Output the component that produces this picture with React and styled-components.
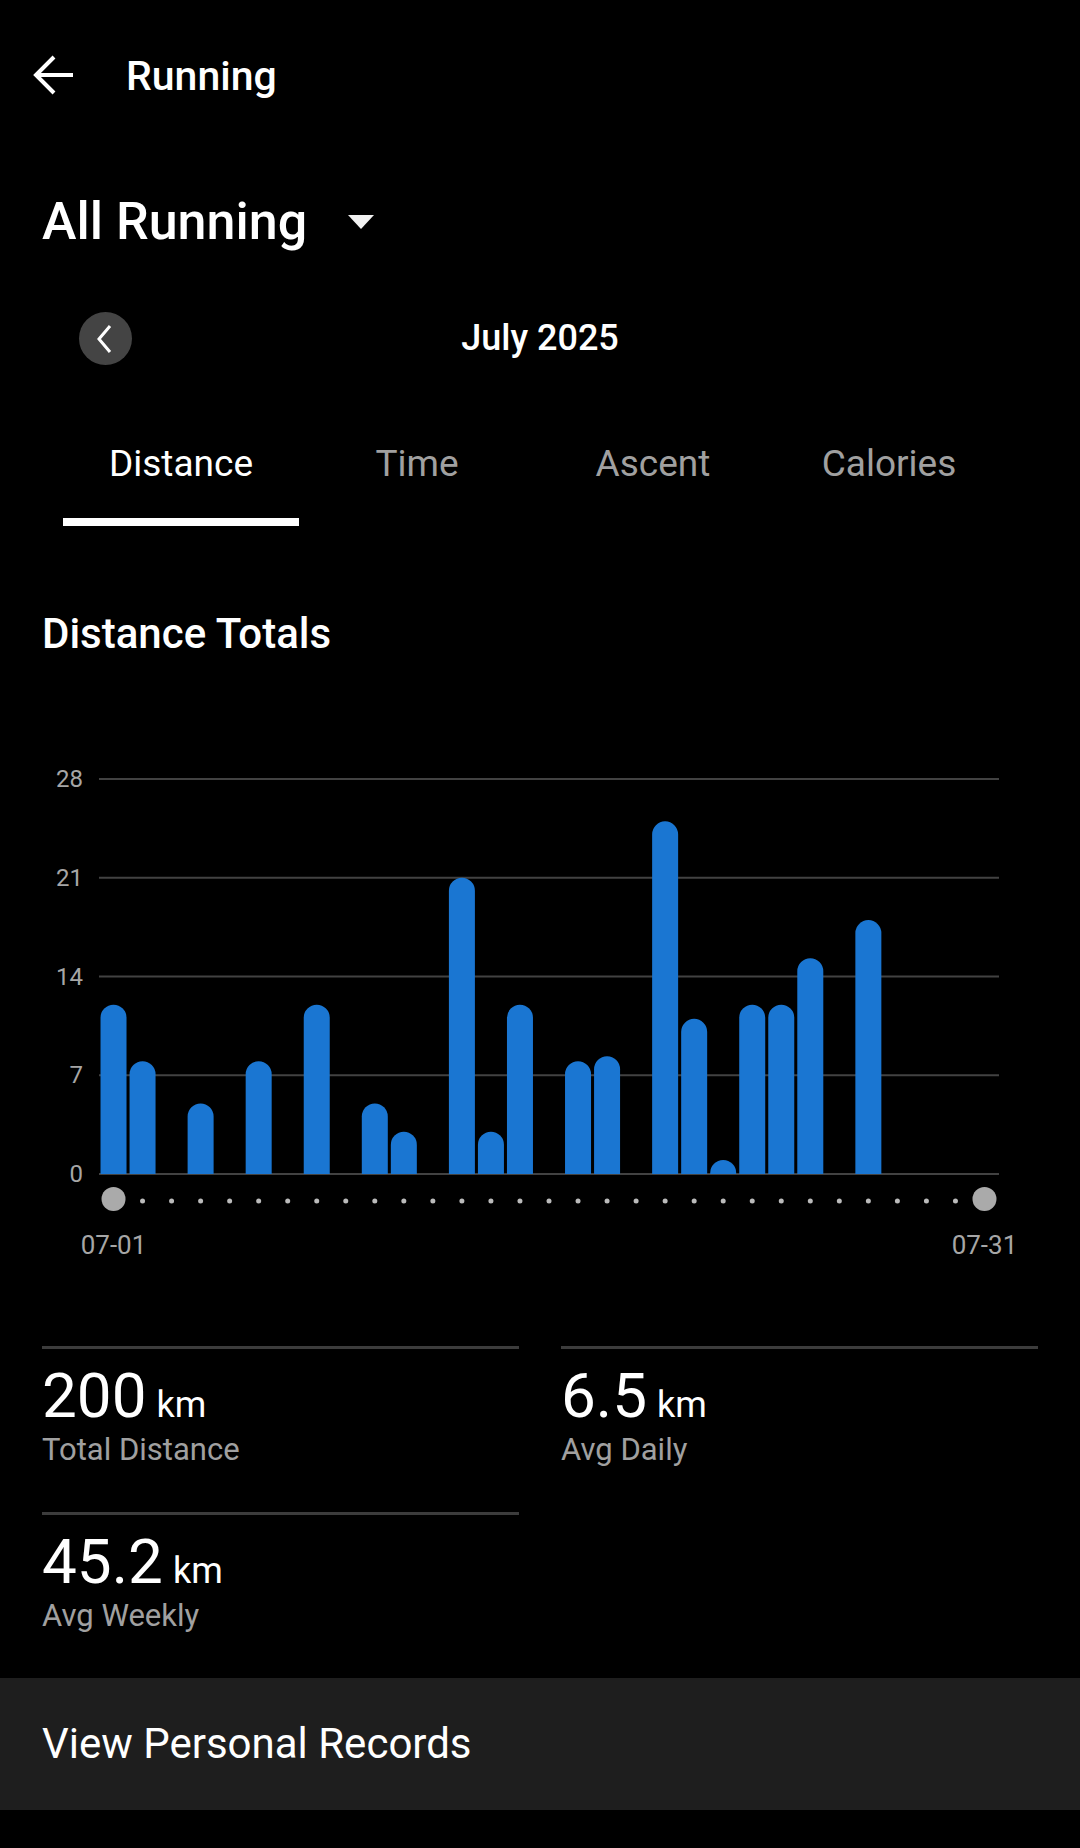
import styled, { createGlobalStyle } from 'styled-components';

const GlobalStyle = createGlobalStyle`
  html, body {
    margin: 0;
    padding: 0;
    background: #000;
  }
  body {
    font-family: Roboto, 'Liberation Sans', Arial, sans-serif;
    color: #fff;
  }
`;

// km per day for July
const days = [
  12, 8, 0, 5, 0, 8, 0, 12, 0, 5, 3, 0, 21, 3, 12, 0, 8, 8.35, 0, 25, 11, 1,
  12, 12, 15.3, 0, 18, 0, 0, 0, 0,
];

const tabs = ['Distance', 'Time', 'Ascent', 'Calories'];
const ticks = [28, 21, 14, 7, 0];

const PLOT_W = 900;
const DAY_W = PLOT_W / 31;
const TOP = 12;
const BASE = 407;
const PX_PER_KM = (BASE - TOP) / 28;
const BAR_W = 26;

const barPath = (i, v) => {
  const h = v * PX_PER_KM;
  const x = i * DAY_W + (DAY_W - BAR_W) / 2;
  const r = BAR_W / 2;
  const top = BASE - h;
  return `M${x} ${BASE} L${x} ${top + r} A${r} ${r} 0 0 1 ${x + BAR_W} ${top + r} L${x + BAR_W} ${BASE} Z`;
};

const BackArrow = () => (
  <svg width="42" height="42" viewBox="0 0 42 42" fill="none">
    <path d="M4 21H41" stroke="#fff" strokeWidth="4" />
    <path d="M22 3L4 21L22 39" stroke="#fff" strokeWidth="4" />
  </svg>
);

const Chart = () => (
  <ChartRow>
    <YAxis>
      {ticks.map((t) => (
        <Tick key={t}>{t}</Tick>
      ))}
    </YAxis>
    <svg width={PLOT_W} height="448" viewBox={`0 0 ${PLOT_W} 448`}>
      {ticks.map((t) => {
        const y = BASE - t * PX_PER_KM;
        return <rect key={t} x="0" y={y - 1} width={PLOT_W} height="2" fill="#424242" />;
      })}
      {days.map((v, i) => (v > 0 ? <path key={i} d={barPath(i, v)} fill="#1a76d2" /> : null))}
      {days.map((_, i) => {
        const cx = i * DAY_W + DAY_W / 2;
        const end = i === 0 || i === days.length - 1;
        return <circle key={i} cx={cx} cy={end ? 432 : 434} r={end ? 12 : 2.5} fill={end ? '#aaa' : '#bbb'} />;
      })}
    </svg>
  </ChartRow>
);

const Stat = ({ value, unit, label }) => (
  <StatCell>
    <StatValue>
      {value}
      <Unit>{unit}</Unit>
    </StatValue>
    <StatLabel>{label}</StatLabel>
  </StatCell>
);

const App = () => {
  return (
    <Page>
      <GlobalStyle />
      <Header>
        <BackArrow />
        <HeaderTitle>Running</HeaderTitle>
      </Header>

      <ActivityRow>
        <ActivityTitle>All Running</ActivityTitle>
        <svg width="26" height="14" viewBox="0 0 26 14">
          <polygon points="0,0 26,0 13,14" fill="#f2f2f2" />
        </svg>
      </ActivityRow>

      <MonthNav>
        <NavCell>
          <RoundButton>
            <svg width="16" height="30" viewBox="0 0 16 30" fill="none">
              <path d="M14 2L3 15L14 28" stroke="#fff" strokeWidth="3" />
            </svg>
          </RoundButton>
        </NavCell>
        <Month>July 2025</Month>
        <NavCell />
      </MonthNav>

      <TabBar>
        {tabs.map((t, i) => (
          <Tab key={t} $active={i === 0}>
            {t}
          </Tab>
        ))}
      </TabBar>

      <SectionTitle>Distance Totals</SectionTitle>

      <Chart />

      <DateRow>
        {days.map((_, i) => (
          <DateLabel key={i}>
            {i === 0 ? '07-01' : i === days.length - 1 ? '07-31' : ''}
          </DateLabel>
        ))}
      </DateRow>

      <Stats>
        <Stat value="200" unit="km" label="Total Distance" />
        <Stat value="6.5" unit="km" label="Avg Daily" />
        <Stat value="45.2" unit="km" label="Avg Weekly" />
      </Stats>

      <RecordsBar>View Personal Records</RecordsBar>
    </Page>
  );
};

export default App;

const Page = styled.div`
  width: 1080px;
  min-height: 1848px;
  background: #000;
  overflow: hidden;
`;

const Header = styled.header`
  height: 150px;
  display: flex;
  align-items: center;
  padding-left: 32px;
  gap: 52px;
`;

const HeaderTitle = styled.h1`
  margin: 0;
  font-size: 41px;
  font-weight: 500;
  line-height: 44px;
  padding-top: 1px;
  color: #fff;
`;

const ActivityRow = styled.div`
  margin-top: 42px;
  height: 60px;
  padding-left: 42px;
  display: flex;
  align-items: center;
  gap: 41px;
`;

const ActivityTitle = styled.h2`
  margin: 0;
  font-size: 52px;
  font-weight: 500;
  line-height: 60px;
  color: #fff;
`;

const MonthNav = styled.div`
  margin-top: 60px;
  height: 53px;
  display: grid;
  grid-template-columns: 1fr auto 1fr;
  align-items: center;
`;

const NavCell = styled.div`
  padding-left: 79px;
  display: flex;
`;

const RoundButton = styled.button`
  width: 53px;
  height: 53px;
  border-radius: 50%;
  border: none;
  padding: 0 4px 0 0;
  background: #444;
  display: flex;
  align-items: center;
  justify-content: center;
`;

const Month = styled.div`
  font-size: 36px;
  font-weight: 500;
  line-height: 53px;
  color: #fff;
`;

const TabBar = styled.nav`
  margin-top: 78px;
  padding-left: 63px;
  display: flex;
`;

const Tab = styled.div`
  width: 236px;
  text-align: center;
  font-size: 37px;
  line-height: 42px;
  padding-bottom: 33px;
  color: ${(p) => (p.$active ? '#fff' : '#a0a0a0')};
  border-bottom: 8px solid ${(p) => (p.$active ? '#fff' : 'transparent')};
`;

const SectionTitle = styled.h3`
  margin: 84px 0 0;
  padding-left: 42px;
  font-size: 42px;
  font-weight: 500;
  line-height: 48px;
  color: #fff;
`;

const ChartRow = styled.div`
  margin-top: 109px;
  display: flex;
  align-items: flex-start;
`;

const YAxis = styled.div`
  width: 83px;
  padding-right: 16px;
  height: 419px;
  display: flex;
  flex-direction: column;
  justify-content: space-between;
  align-items: flex-end;
`;

const Tick = styled.span`
  font-size: 24px;
  line-height: 24px;
  color: #a6a6a6;
`;

const DateRow = styled.div`
  margin-top: 18px;
  margin-left: 99px;
  width: 900px;
  display: flex;
`;

const DateLabel = styled.span`
  flex: 1 1 0;
  min-width: 0;
  display: flex;
  justify-content: center;
  white-space: nowrap;
  font-size: 26px;
  line-height: 24px;
  color: #a6a6a6;
`;

const Stats = styled.section`
  margin-top: 89px;
  padding: 0 42px;
  display: grid;
  grid-template-columns: 1fr 1fr;
  column-gap: 42px;
  row-gap: 44px;
`;

const StatCell = styled.div`
  border-top: 3px solid #3c3c3c;
  padding-top: 11px;
`;

const StatValue = styled.div`
  font-size: 62px;
  line-height: 72px;
  color: #fff;
`;

const Unit = styled.span`
  font-size: 36px;
  line-height: 0;
  margin-left: 10px;
`;

const StatLabel = styled.div`
  font-size: 31px;
  line-height: 36px;
  color: #a0a0a0;
`;

const RecordsBar = styled.div`
  margin-top: 44px;
  height: 132px;
  background: #1e1e1e;
  display: flex;
  align-items: center;
  padding: 0 42px;
  box-sizing: border-box;
  font-size: 42px;
  line-height: 48px;
  color: #fff;
`;
